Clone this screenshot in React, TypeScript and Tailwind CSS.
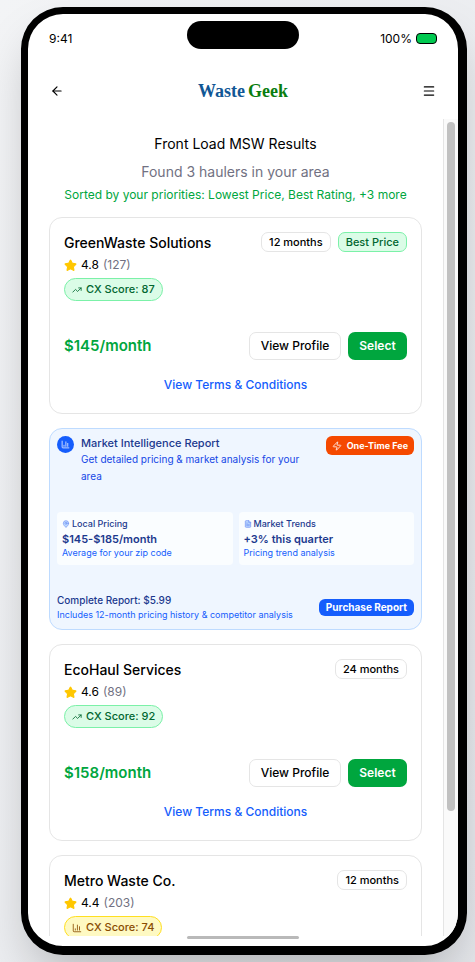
import type { ReactNode } from "react";
import {
  ArrowLeft,
  ChartColumn,
  FileText,
  MapPin,
  Menu,
  Star,
  TrendingUp,
  Zap,
} from "lucide-react";

type Hauler = {
  name: string;
  rating: string;
  reviews: number;
  score: number;
  price: string;
  term: string;
  bestPrice?: boolean;
};

const greenWaste: Hauler = {
  name: "GreenWaste Solutions",
  rating: "4.8",
  reviews: 127,
  score: 87,
  price: "$145/month",
  term: "12 months",
  bestPrice: true,
};

const ecoHaul: Hauler = {
  name: "EcoHaul Services",
  rating: "4.6",
  reviews: 89,
  score: 92,
  price: "$158/month",
  term: "24 months",
};

const metroWaste: Hauler = {
  name: "Metro Waste Co.",
  rating: "4.4",
  reviews: 203,
  score: 74,
  price: "",
  term: "12 months",
};

function ScorePill({ score }: { score: number }) {
  const high = score >= 80;
  const Icon = high ? TrendingUp : ChartColumn;
  return (
    <span
      className={
        "inline-flex h-[23px] items-center gap-1 rounded-full border px-[7px] text-[11px] font-medium " +
        (high
          ? "border-green-300 bg-green-100 text-green-800"
          : "border-yellow-300 bg-yellow-100 text-yellow-800")
      }
    >
      <Icon className="size-[10px]" />
      CX Score: {score}
    </span>
  );
}

function HaulerCard({ hauler }: { hauler: Hauler }) {
  return (
    <article className="flex shrink-0 flex-col rounded-[13px] border border-neutral-200 bg-white p-[14px] pb-[19px]">
      <div className="flex items-start justify-between">
        <div>
          <h2 className="text-sm leading-[22px] font-medium">{hauler.name}</h2>
          <p className="flex h-[22px] items-center gap-1 text-xs">
            <Star className="size-[13px] fill-[#ffc700] text-[#ffc700]" />
            {hauler.rating} <span className="text-[#717182]">({hauler.reviews})</span>
          </p>
          <div className="mt-[2px] flex">
            <ScorePill score={hauler.score} />
          </div>
        </div>
        <div className="flex gap-[7px]">
          <span className="flex h-5 items-center rounded-[7px] border border-neutral-200 px-[7px] text-[11px] font-medium">
            {hauler.term}
          </span>
          {hauler.bestPrice && (
            <span className="flex h-5 items-center rounded-[7px] border border-green-300 bg-green-100 px-[7px] text-[11px] font-medium text-green-800">
              Best Price
            </span>
          )}
        </div>
      </div>
      {hauler.price && (
        <>
          <div className="mt-[31px] flex items-center justify-between">
            <p className="text-[15px] font-semibold text-[#00a63e]">{hauler.price}</p>
            <div className="flex gap-[7px]">
              <button className="h-7 w-[92px] rounded-[7px] border border-neutral-200 text-xs font-medium">
                View Profile
              </button>
              <button className="h-7 w-[59px] rounded-[7px] bg-[#00a63e] text-xs font-semibold text-white">
                Select
              </button>
            </div>
          </div>
          <a href="#terms" className="mt-4 self-center text-xs leading-[18px] font-medium text-[#155dfc]">
            View Terms &amp; Conditions
          </a>
        </>
      )}
    </article>
  );
}

function Stat({ icon, label, value, note }: { icon: ReactNode; label: string; value: string; note: string }) {
  return (
    <div className="flex-1 rounded-[4px] bg-[#fafdff] px-[5px] pt-[5px] pb-[6px]">
      <p className="flex items-center gap-[2px] text-[9px] leading-[14px] font-medium text-[#1c398e]">
        {icon}
        {label}
      </p>
      <p className="text-[11px] leading-4 font-semibold text-[#1c398e]">{value}</p>
      <p className="text-[9px] leading-3 text-[#155dfc]">{note}</p>
    </div>
  );
}

function MarketReport() {
  return (
    <section className="shrink-0 rounded-[13px] border border-[#bedbff] bg-[#eff6ff] p-[7px]">
      <div className="flex items-start justify-between">
        <div className="flex gap-[7px]">
          <span className="flex size-[17px] shrink-0 items-center justify-center rounded-full bg-[#155dfc] text-white">
            <ChartColumn className="size-[9px]" />
          </span>
          <div className="max-w-[240px]">
            <h2 className="text-[11px] leading-[15px] font-medium text-[#1c398e]">
              Market Intelligence Report
            </h2>
            <p className="text-[10px] leading-[17px] text-[#1447e6]">
              Get detailed pricing &amp; market analysis for your area
            </p>
          </div>
        </div>
        <span className="flex h-[19px] shrink-0 items-center gap-[5px] rounded-[6px] bg-[#f54900] px-[6px] text-[9px] font-bold text-white">
          <Zap className="size-[10px]" />
          One-Time Fee
        </span>
      </div>
      <div className="mt-[27px] flex gap-[6px]">
        <Stat
          icon={<MapPin className="size-2 fill-[#bedbff] text-[#6b8cf5]" />}
          label="Local Pricing"
          value="$145-$185/month"
          note="Average for your zip code"
        />
        <Stat
          icon={<FileText className="size-2 fill-[#bedbff] text-[#6b8cf5]" />}
          label="Market Trends"
          value="+3% this quarter"
          note="Pricing trend analysis"
        />
      </div>
      <div className="mt-7 flex items-center justify-between">
        <div>
          <p className="text-[10px] leading-[15px] font-medium text-[#1c398e]">Complete Report: $5.99</p>
          <p className="text-[9px] leading-[14px] text-[#155dfc]">
            Includes 12-month pricing history &amp; competitor analysis
          </p>
        </div>
        <button className="h-[17px] rounded-[6px] bg-[#155dfc] px-[7px] text-[10px] font-bold text-white">
          Purchase Report
        </button>
      </div>
    </section>
  );
}

export default function App() {
  return (
    <div className="flex h-screen bg-linear-to-br from-gray-100 to-gray-200 py-[7px] pr-2 pl-[21px] font-['Inter','Liberation_Sans',sans-serif] text-black">
      <div className="flex min-w-0 flex-1 flex-col overflow-hidden rounded-[42px] border-t-[7px] border-r-[9px] border-b-[9px] border-l-[7px] border-black bg-white shadow-2xl">
        <div className="grid h-[49px] shrink-0 grid-cols-3 items-center px-[21px] text-xs">
          <span>9:41</span>
          <span className="mb-[7px] h-7 w-28 justify-self-center rounded-full bg-black" />
          <span className="flex items-center gap-1 justify-self-end">
            100%
            <span className="h-[11px] w-[21px] rounded-[4px] border border-black bg-[#00c950]" />
          </span>
        </div>
        <header className="flex h-14 shrink-0 items-center justify-between px-[22px]">
          <button aria-label="Back">
            <ArrowLeft className="size-[14px]" />
          </button>
          <span className="flex gap-[3px] font-['Liberation_Serif',serif] text-lg font-bold text-[#115795]">
            <span>Waste</span>
            <span className="text-[#0a7d0f]">Geek</span>
          </span>
          <button aria-label="Menu">
            <Menu className="size-[14px]" />
          </button>
        </header>
        <div className="flex min-h-0 flex-1">
          <main className="flex min-w-0 flex-1 flex-col gap-[14px] overflow-y-auto px-[21px] pt-[14px] [scrollbar-width:none]">
            <div className="text-center">
              <h1 className="text-sm leading-[22px]">Front Load MSW Results</h1>
              <p className="mt-[7px] text-sm leading-5 text-[#717182]">Found 3 haulers in your area</p>
              <p className="mt-1 text-xs leading-[17px] text-[#00a63e]">
                Sorted by your priorities: Lowest Price, Best Rating, +3 more
              </p>
            </div>
            <HaulerCard hauler={greenWaste} />
            <MarketReport />
            <HaulerCard hauler={ecoHaul} />
            <HaulerCard hauler={metroWaste} />
          </main>
          <div className="flex w-[15px] shrink-0 flex-col items-center border-l border-neutral-200 bg-[#fafafa] pt-[3px]">
            <div className="h-11/13 w-2 rounded-full bg-[#c1c1c1]" />
          </div>
        </div>
        <div className="flex h-[10px] shrink-0 justify-center">
          <span className="h-[3px] w-28 rounded-full bg-[#b9b9b9]" />
        </div>
      </div>
    </div>
  );
}
